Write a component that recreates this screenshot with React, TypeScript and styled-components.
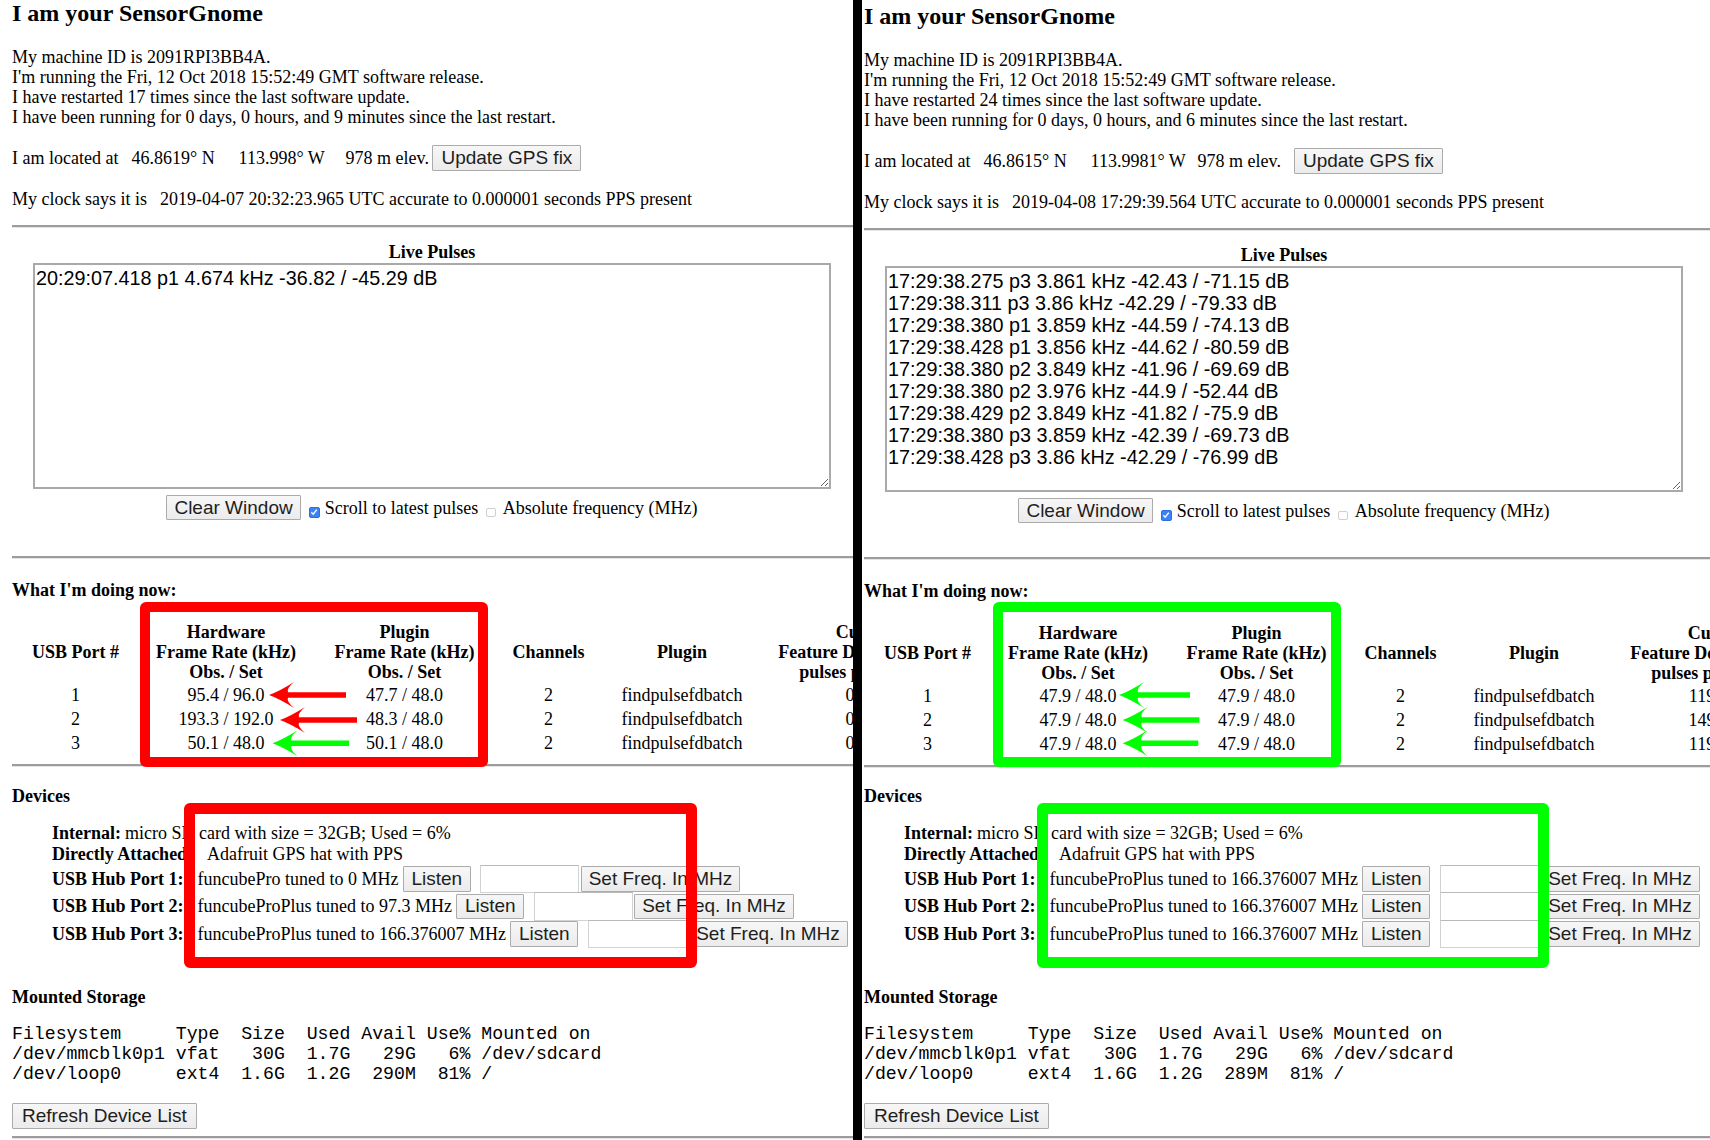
import React from 'react';
import styled, { createGlobalStyle } from 'styled-components';

const GlobalStyle = createGlobalStyle`
  html, body { margin: 0; padding: 0; background: #fff; }
  body {
    font-family: "Liberation Serif", "Times New Roman", serif;
    color: #000;
  }
`;

type RateRow = { port: number; hw: string; plugin: string; feature: string };
type Arrow = { tip: number; y: number; tail: number; color: string };
type Box = { left: number; top: number; w: number; h: number; thick: number };

type PanelData = {
  width: number;
  padLeft: number;
  padTop: number;
  restarts: number;
  minutes: number;
  lat: string;
  lon: string;
  clock: string;
  gpsGap: number;
  pulses: string[];
  rates: RateRow[];
  ports: string[];
  loopAvail: string;
  color: string;
  arrows: Arrow[];
  tableBox: Box;
  devBox: Box;
  ruleGap: number;
  devicesGap: number;
  ruleExtend: number;
};

const Screen = styled.div`
  display: flex;
  width: 1710px;
  height: 1140px;
  overflow: hidden;
  background: #fff;
`;

const Divider = styled.div`
  flex: 0 0 9px;
  background: #000;
`;

const Panel = styled.div<{ $width: number; $padLeft: number; $padTop: number }>`
  position: relative;
  flex: 0 0 ${p => p.$width}px;
  box-sizing: border-box;
  height: 1140px;
  overflow: hidden;
  padding: ${p => p.$padTop}px 0 0 ${p => p.$padLeft}px;
`;

const Page = styled.div`
  width: 840px;
  font-size: 18px;
  line-height: 20px;
`;

const Title = styled.h1`
  margin: 1px 0 0;
  font-size: 24px;
  line-height: 24px;
  font-weight: bold;
`;

const Info = styled.div`
  margin-top: 22px;
`;

const Line = styled.div`
  height: 20px;
  white-space: nowrap;
`;

const LocationRow = styled.div`
  display: flex;
  align-items: center;
  height: 26px;
  margin-top: 18px;
  white-space: nowrap;
`;

const ClockRow = styled.div`
  display: flex;
  height: 20px;
  margin-top: 18px;
  white-space: nowrap;
`;

const Lead = styled.span<{ $w: number }>`
  flex: 0 0 ${p => p.$w}px;
`;

const Field = styled.span`
  flex: 0 0 107px;
`;

const Rule = styled.div<{ $mt: number; $extend?: number }>`
  margin-top: ${p => p.$mt}px;
  margin-right: ${p => -(p.$extend ?? 0)}px;
  height: 0;
  border-top: 2px solid #9c9c9c;
  border-bottom: 1px solid #e4e4e4;
`;

const PulsesLabel = styled.div`
  margin-top: 14px;
  text-align: center;
  font-weight: bold;
  height: 20px;
`;

const PulseBox = styled.textarea`
  display: block;
  box-sizing: border-box;
  width: 798px;
  height: 226px;
  margin: 1px auto 0;
  padding: 2px 1px;
  border: 2px solid #a9a9a9;
  font-family: "Liberation Sans", Arial, Helvetica, sans-serif;
  font-size: 19.8px;
  line-height: 22px;
  color: #000;
  background: #fff;
  overflow: hidden;
  resize: both;
  outline: none;
`;

const Controls = styled.div`
  display: flex;
  justify-content: center;
  align-items: center;
  height: 25px;
  margin-top: 6px;
  white-space: nowrap;
`;

const Button = styled.button<{ $ml?: number; $px: number }>`
  box-sizing: border-box;
  flex: 0 0 auto;
  height: 25.5px;
  margin: 0 0 0 ${p => p.$ml ?? 0}px;
  padding: 0 ${p => p.$px}px;
  font-family: "Liberation Sans", Arial, Helvetica, sans-serif;
  font-size: 19px;
  line-height: 20px;
  color: #1e1e1e;
  background: linear-gradient(#f7f7f7, #ebebeb);
  border: 1.5px solid #ababab;
  border-radius: 1px;
  white-space: nowrap;
`;

const Check = styled.span<{ $on?: boolean; $ml: number }>`
  display: inline-flex;
  align-items: center;
  justify-content: center;
  box-sizing: border-box;
  flex: 0 0 auto;
  width: ${p => (p.$on ? 11 : 10)}px;
  height: ${p => (p.$on ? 11 : 9)}px;
  margin: 9px 0 0 ${p => p.$ml}px;
  border-radius: 2px;
  background: ${p => (p.$on ? '#3b82f6' : '#fff')};
  border: 1px solid ${p => (p.$on ? '#2d6fe0' : '#cfcfcf')};
`;

const CheckLabel = styled.span<{ $ml: number }>`
  margin-left: ${p => p.$ml}px;
`;

const SectionHeading = styled.div<{ $mt: number }>`
  margin-top: ${p => p.$mt}px;
  height: 20px;
  font-weight: bold;
`;

const RateTable = styled.div`
  display: grid;
  grid-template-columns: 126.8px 174.4px 182.8px 105px 162px 208px;
  grid-template-rows: 61px 24px 24px 24px;
  align-items: center;
  text-align: center;
  margin-top: 21.7px;
  width: max-content;
`;

const HeadCell = styled.div`
  font-weight: bold;
  line-height: 20px;
  white-space: nowrap;
`;

const Cell = styled.div<{ $shift?: number }>`
  line-height: 20px;
  white-space: nowrap;
  padding-right: ${p => p.$shift ?? 0}px;
`;

const DeviceList = styled.div`
  margin-top: 17px;
  padding-left: 40px;
  white-space: nowrap;
`;

const DeviceLine = styled.div`
  display: flex;
  height: 21px;
  line-height: 21px;
`;

const DevLabel = styled.b<{ $w: number }>`
  flex: 0 0 ${p => p.$w}px;
  font-weight: bold;
`;

const PortRow = styled.div`
  display: flex;
  align-items: center;
  height: 27.5px;
`;

const FreqInput = styled.input`
  box-sizing: border-box;
  flex: 0 0 auto;
  width: 99px;
  height: 28.5px;
  margin: 0 1.5px 0 9.5px;
  padding: 0 4px;
  border: 1.5px solid #d2d2d2;
  border-top-color: #b9b9b9;
  background: #fff;
  font-size: 18px;
`;

const Storage = styled.pre`
  margin: 18.3px 0 0;
  font-family: "Liberation Mono", "Courier New", monospace;
  font-size: 18.2px;
  line-height: 19.7px;
`;

const ButtonBar = styled.div`
  margin-top: 19px;
  height: 25.5px;
  display: flex;
`;

const Highlight = styled.div<{ $color: string; $box: Box }>`
  position: absolute;
  left: ${p => p.$box.left}px;
  top: ${p => p.$box.top}px;
  width: ${p => p.$box.w}px;
  height: ${p => p.$box.h}px;
  box-sizing: border-box;
  border: ${p => p.$box.thick}px solid ${p => p.$color};
  border-radius: 6px;
  pointer-events: none;
`;

const ArrowLayer = styled.svg`
  position: absolute;
  left: 0;
  top: 0;
  pointer-events: none;
`;

function arrowPath(a: Arrow) {
  const { tip: x, y, tail } = a;
  const h = 2.8;
  return [
    `M${x} ${y}`,
    `Q${x + 11} ${y - 4} ${x + 25} ${y - 13}`,
    `Q${x + 17} ${y - 6} ${x + 19} ${y - h}`,
    `L${tail} ${y - h}`,
    `L${tail} ${y + h}`,
    `L${x + 19} ${y + h}`,
    `Q${x + 17} ${y + 6} ${x + 25} ${y + 13}`,
    `Q${x + 11} ${y + 4} ${x} ${y}`,
    'Z',
  ].join(' ');
}

function SensorPanel({ d }: { d: PanelData }) {
  const df =
    'Filesystem     Type  Size  Used Avail Use% Mounted on\n' +
    '/dev/mmcblk0p1 vfat   30G  1.7G   29G   6% /dev/sdcard\n' +
    `/dev/loop0     ext4  1.6G  1.2G  ${d.loopAvail}  81% /`;
  return (
    <Panel $width={d.width} $padLeft={d.padLeft} $padTop={d.padTop}>
      <Page>
        <Title>I am your SensorGnome</Title>
        <Info>
          <Line>My machine ID is 2091RPI3BB4A.</Line>
          <Line>I'm running the Fri, 12 Oct 2018 15:52:49 GMT software release.</Line>
          <Line>I have restarted {d.restarts} times since the last software update.</Line>
          <Line>
            I have been running for 0 days, 0 hours, and {d.minutes} minutes since the last restart.
          </Line>
        </Info>
        <LocationRow>
          <Lead $w={119.6}>I am located at</Lead>
          <Field>{d.lat}° N</Field>
          <Field>{d.lon}° W</Field>
          <span>978 m elev.</span>
          <Button $ml={d.gpsGap} $px={8}>
            Update GPS fix
          </Button>
        </LocationRow>
        <ClockRow>
          <Lead $w={148}>My clock says it is</Lead>
          <span>{d.clock} UTC accurate to 0.000001 seconds PPS present</span>
        </ClockRow>
        <Rule $mt={16} $extend={d.ruleExtend} />
        <PulsesLabel>Live Pulses</PulsesLabel>
        <PulseBox readOnly value={d.pulses.join('\n')} />
        <Controls>
          <Button $px={7}>Clear Window</Button>
          <Check $on $ml={8}>
            <svg width="8" height="8" viewBox="0 0 8 8">
              <path d="M1.3 4.3 L3.2 6.2 L6.8 1.6" fill="none" stroke="#fff" strokeWidth="1.4" />
            </svg>
          </Check>
          <CheckLabel $ml={5}>Scroll to latest pulses</CheckLabel>
          <Check $ml={7.5} />
          <CheckLabel $ml={7}>Absolute frequency (MHz)</CheckLabel>
        </Controls>
        <Rule $mt={d.ruleGap} $extend={d.ruleExtend} />
        <SectionHeading $mt={21.5}>What I'm doing now:</SectionHeading>
        <RateTable>
          <HeadCell>USB Port #</HeadCell>
          <HeadCell>
            Hardware
            <br />
            Frame Rate (kHz)
            <br />
            Obs. / Set
          </HeadCell>
          <HeadCell>
            Plugin
            <br />
            Frame Rate (kHz)
            <br />
            Obs. / Set
          </HeadCell>
          <HeadCell>Channels</HeadCell>
          <HeadCell>Plugin</HeadCell>
          <HeadCell>
            Current
            <br />
            Feature Detection Rate
            <br />
            pulses per minute
          </HeadCell>
          {d.rates.map(r => (
            <React.Fragment key={r.port}>
              <Cell>{r.port}</Cell>
              <Cell>{r.hw}</Cell>
              <Cell>{r.plugin}</Cell>
              <Cell>2</Cell>
              <Cell>findpulsefdbatch</Cell>
              <Cell $shift={34}>{r.feature}</Cell>
            </React.Fragment>
          ))}
        </RateTable>
        <Rule $mt={9} $extend={d.ruleExtend} />
        <SectionHeading $mt={d.devicesGap}>Devices</SectionHeading>
        <DeviceList>
          <DeviceLine>
            <DevLabel $w={73}>Internal:</DevLabel>
            <span>micro SD card with size = 32GB; Used = 6%</span>
          </DeviceLine>
          <DeviceLine>
            <DevLabel $w={155}>Directly Attached:</DevLabel>
            <span>Adafruit GPS hat with PPS</span>
          </DeviceLine>
          {d.ports.map((p, i) => (
            <PortRow key={i}>
              <DevLabel $w={145.5}>USB Hub Port {i + 1}:</DevLabel>
              <span>{p}</span>
              <Button $ml={4.5} $px={7.5}>
                Listen
              </Button>
              <FreqInput type="text" />
              <Button $px={7}>Set Freq. In MHz</Button>
            </PortRow>
          ))}
        </DeviceList>
        <SectionHeading $mt={39.2}>Mounted Storage</SectionHeading>
        <Storage>{df}</Storage>
        <ButtonBar>
          <Button $px={9}>Refresh Device List</Button>
        </ButtonBar>
        <Rule $mt={7.5} $extend={d.ruleExtend} />
      </Page>
      <Highlight $color={d.color} $box={d.tableBox} />
      <Highlight $color={d.color} $box={d.devBox} />
      <ArrowLayer width={d.width} height={1140} viewBox={`0 0 ${d.width} 1140`}>
        {d.arrows.map((a, i) => (
          <path key={i} d={arrowPath(a)} fill={a.color} />
        ))}
      </ArrowLayer>
    </Panel>
  );
}

const RED = '#ff0000';
const GREEN = '#00ff00';

const leftData: PanelData = {
  width: 853,
  padLeft: 12,
  padTop: 0,
  restarts: 17,
  minutes: 9,
  lat: '46.8619',
  lon: '113.998',
  clock: '2019-04-07 20:32:23.965',
  gpsGap: 3.5,
  pulses: ['20:29:07.418 p1 4.674 kHz -36.82 / -45.29 dB'],
  rates: [
    { port: 1, hw: '95.4 / 96.0', plugin: '47.7 / 48.0', feature: '0' },
    { port: 2, hw: '193.3 / 192.0', plugin: '48.3 / 48.0', feature: '0' },
    { port: 3, hw: '50.1 / 48.0', plugin: '50.1 / 48.0', feature: '0' },
  ],
  ports: [
    'funcubePro tuned to 0 MHz',
    'funcubeProPlus tuned to 97.3 MHz',
    'funcubeProPlus tuned to 166.376007 MHz',
  ],
  loopAvail: '290M',
  color: RED,
  arrows: [
    { tip: 269, y: 695, tail: 346, color: RED },
    { tip: 280, y: 720, tail: 357, color: RED },
    { tip: 272.5, y: 743.3, tail: 349, color: GREEN },
  ],
  tableBox: { left: 140, top: 602, w: 348, h: 165, thick: 10 },
  devBox: { left: 184, top: 803, w: 513, h: 165, thick: 11 },
  ruleGap: 35.5,
  devicesGap: 19.5,
  ruleExtend: 1,
};

const rightData: PanelData = {
  width: 848,
  padLeft: 2,
  padTop: 3,
  restarts: 24,
  minutes: 6,
  lat: '46.8615',
  lon: '113.9981',
  clock: '2019-04-08 17:29:39.564',
  gpsGap: 13,
  pulses: [
    '17:29:38.275 p3 3.861 kHz -42.43 / -71.15 dB',
    '17:29:38.311 p3 3.86 kHz -42.29 / -79.33 dB',
    '17:29:38.380 p1 3.859 kHz -44.59 / -74.13 dB',
    '17:29:38.428 p1 3.856 kHz -44.62 / -80.59 dB',
    '17:29:38.380 p2 3.849 kHz -41.96 / -69.69 dB',
    '17:29:38.380 p2 3.976 kHz -44.9 / -52.44 dB',
    '17:29:38.429 p2 3.849 kHz -41.82 / -75.9 dB',
    '17:29:38.380 p3 3.859 kHz -42.39 / -69.73 dB',
    '17:29:38.428 p3 3.86 kHz -42.29 / -76.99 dB',
  ],
  rates: [
    { port: 1, hw: '47.9 / 48.0', plugin: '47.9 / 48.0', feature: '119' },
    { port: 2, hw: '47.9 / 48.0', plugin: '47.9 / 48.0', feature: '149' },
    { port: 3, hw: '47.9 / 48.0', plugin: '47.9 / 48.0', feature: '119' },
  ],
  ports: [
    'funcubeProPlus tuned to 166.376007 MHz',
    'funcubeProPlus tuned to 166.376007 MHz',
    'funcubeProPlus tuned to 166.376007 MHz',
  ],
  loopAvail: '289M',
  color: GREEN,
  arrows: [
    { tip: 257, y: 695, tail: 328, color: GREEN },
    { tip: 260.6, y: 720, tail: 337.4, color: GREEN },
    { tip: 260.6, y: 743.3, tail: 336.3, color: GREEN },
  ],
  tableBox: { left: 131, top: 602, w: 348, h: 165, thick: 10 },
  devBox: { left: 175, top: 803, w: 512, h: 165, thick: 11 },
  ruleGap: 33.5,
  devicesGap: 18.5,
  ruleExtend: 8,
};

export default function App() {
  return (
    <>
      <GlobalStyle />
      <Screen>
        <SensorPanel d={leftData} />
        <Divider />
        <SensorPanel d={rightData} />
      </Screen>
    </>
  );
}
